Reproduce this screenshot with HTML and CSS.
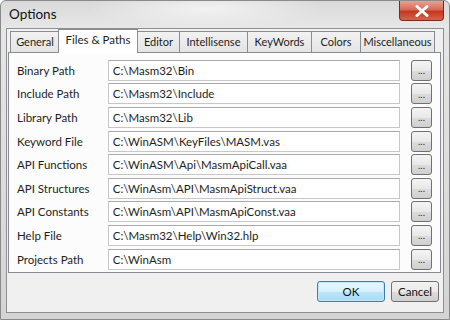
FILE: index.html
```html
<!DOCTYPE html>
<html lang="en">

<head>
    <meta charset="UTF-8">
    <title>Options</title>
    <link rel="stylesheet" href="styles.css">
</head>

<body>
    <div class="window">
        <div class="titlebar">
            <span class="title">Options</span>
            <span class="close">
                <svg width="14" height="12" viewBox="0 0 14 12">
                    <path d="M2 1.5 L12 10.5 M12 1.5 L2 10.5" stroke="#fff" stroke-width="3" stroke-linecap="round"/>
                </svg>
            </span>
        </div>
        <div class="client">
            <ul class="tabs">
                <li class="t-general">General</li>
                <li class="t-files active">Files &amp; Paths</li>
                <li class="t-editor">Editor</li>
                <li class="t-intel">Intellisense</li>
                <li class="t-key">KeyWords</li>
                <li class="t-colors">Colors</li>
                <li class="t-misc">Miscellaneous</li>
            </ul>
            <div class="panel">
                <div class="row"><label>Binary Path</label><input type="text" value="C:\Masm32\Bin"><button class="browse">...</button></div>
                <div class="row"><label>Include Path</label><input type="text" value="C:\Masm32\Include"><button class="browse">...</button></div>
                <div class="row"><label>Library Path</label><input type="text" value="C:\Masm32\Lib"><button class="browse">...</button></div>
                <div class="row"><label>Keyword File</label><input type="text" value="C:\WinASM\KeyFiles\MASM.vas"><button class="browse">...</button></div>
                <div class="row"><label>API Functions</label><input type="text" value="C:\WinASM\Api\MasmApiCall.vaa"><button class="browse">...</button></div>
                <div class="row"><label>API Structures</label><input type="text" value="C:\WinAsm\API\MasmApiStruct.vaa"><button class="browse">...</button></div>
                <div class="row"><label>API Constants</label><input type="text" value="C:\WinAsm\API\MasmApiConst.vaa"><button class="browse">...</button></div>
                <div class="row"><label>Help File</label><input type="text" value="C:\Masm32\Help\Win32.hlp"><button class="browse">...</button></div>
                <div class="row"><label>Projects Path</label><input type="text" value="C:\WinAsm"><button class="browse">...</button></div>
            </div>
            <div class="footer">
                <button class="btn default">OK</button>
                <button class="btn">Cancel</button>
            </div>
        </div>
    </div>
</body>

</html>
```
FILE: styles.css
```css
* {
    padding: 0;
    margin: 0;
    box-sizing: border-box;
}

body {
    font-family: Lato, "Noto Sans", sans-serif;
    font-size: 11.5px;
    color: #1e1e1e;
    background: #fff;
}

.window {
    width: 450px;
    height: 320px;
    background: linear-gradient(180deg, #d9d9d9 0%, #e6e6e6 8%, #d4d4d4 100%);
    border: 1px solid #8a8a8a;
    border-radius: 6px 6px 0 0;
    padding: 0 5px 6px;
    display: flex;
    flex-direction: column;
}

.titlebar {
    height: 27px;
    display: flex;
    align-items: flex-start;
    justify-content: space-between;
    background: radial-gradient(ellipse 120px 20px at 200px 8px, #f2f2f2, transparent);
}

.title {
    font-size: 13.5px;
    padding: 5px 0 0 3px;
    color: #111;
}

.close {
    width: 45px;
    height: 20px;
    border: 1px solid #7a2a20;
    border-top: none;
    border-radius: 0 0 4px 4px;
    background: linear-gradient(180deg, #e8a293 0%, #d56b55 45%, #c2391f 55%, #d9614a 100%);
    display: flex;
    align-items: center;
    justify-content: center;
}

.client {
    flex: 1;
    background: #f0f0f0;
    border: 1px solid #8f8f8f;
    padding: 0 2px 0 1px;
    display: flex;
    flex-direction: column;
}

.tabs {
    display: flex;
    list-style: none;
    padding-left: 2px;
    height: 23px;
    align-items: flex-end;
}

.tabs li {
    height: 21px;
    line-height: 20px;
    font-size: 11px;
    text-align: center;
    white-space: nowrap;
    border: 1px solid #898c95;
    border-bottom: none;
    margin-right: -1px;
    background: linear-gradient(180deg, #f2f2f2, #e4e4e4);
}

.tabs li.active {
    height: 24px;
    margin: 0 -1px -1px -1px;
    background: #fff;
    position: relative;
    z-index: 1;
    line-height: 19px;
    font-size: 11.5px;
}

.t-general { width: 50px; }
.t-files { width: 80px; }
.t-editor { width: 43px; }
.t-intel { width: 69px; }
.t-key { width: 65px; }
.t-colors { width: 50px; }
.t-misc { width: 75px; }

.panel {
    height: 221px;
    border: 1px solid #898c95;
    background: #fcfcfc;
    padding: 7px 8px 0 8px;
    display: flex;
    flex-direction: column;
    gap: 3px;
}

.row {
    display: flex;
    align-items: center;
    height: 20.6px;
}

.row label {
    width: 91px;
}

.row input {
    width: 293px;
    height: 21px;
    border: 1px solid #c7c7c7;
    border-top-color: #a9a9a9;
    background: #fff;
    font-family: Lato, "Noto Sans", sans-serif;
    font-size: 11.5px;
    padding: 0 4px;
    color: #1e1e1e;
}

.browse {
    width: 21px;
    height: 21px;
    margin-left: 11px;
    border: 1px solid #707070;
    border-radius: 3px;
    background: linear-gradient(180deg, #f4f4f4 0%, #e8e8e8 50%, #dcdcdc 51%, #d0d0d0 100%);
    font-size: 10px;
    line-height: 14px;
    color: #333;
    font-family: Lato, sans-serif;
}

.footer {
    flex: 1;
    display: flex;
    justify-content: flex-end;
    align-items: center;
    gap: 6px;
    padding-right: 2px;
    padding-bottom: 2px;
}

.btn {
    height: 21px;
    border: 1px solid #707070;
    border-radius: 3px;
    background: linear-gradient(180deg, #f2f2f2 0%, #ebebeb 50%, #dddddd 51%, #cfcfcf 100%);
    font-family: Lato, sans-serif;
    font-size: 11.5px;
    color: #111;
    width: 48px;
}

.btn.default {
    width: 68px;
    border-color: #3c7fb1;
    background: linear-gradient(180deg, #eaf6fd 0%, #d9f0fc 50%, #bee6fd 51%, #a7d9f5 100%);
    box-shadow: inset 0 0 0 1px #c0e6fa;
}
```
